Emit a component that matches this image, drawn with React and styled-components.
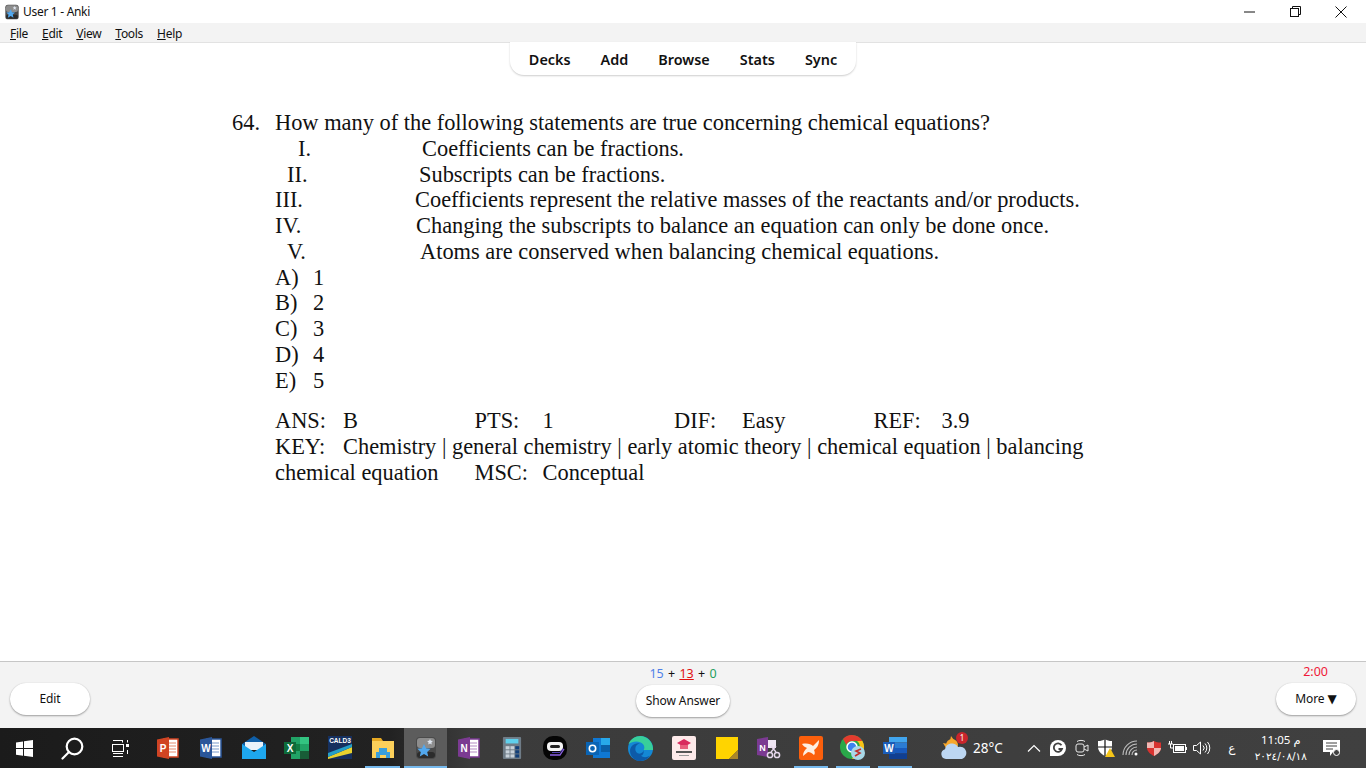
import styled, { createGlobalStyle } from "styled-components"

const UI_FONT = `"Noto Sans", "Open Sans", "DejaVu Sans", sans-serif`

const GlobalStyle = createGlobalStyle`
  html, body {
    margin: 0;
    padding: 0;
    height: 100%;
    overflow: hidden;
    background: #fff;
    font-family: ${UI_FONT};
  }
`

const Screen = styled.div`
  width: 1366px;
  height: 768px;
  display: flex;
  flex-direction: column;
`

/* window chrome */

const TitleBar = styled.div`
  height: 23px;
  display: flex;
  align-items: center;
  padding-left: 4px;
  background: #fff;
  color: #111;
  font-size: 12px;
  letter-spacing: -0.3px;
`

const TitleText = styled.span`
  margin-left: 3px;
  flex: 1;
`

const WinButton = styled.div`
  width: 46px;
  height: 23px;
  display: flex;
  align-items: center;
  justify-content: center;
`

const WinButtons = styled.div`
  display: flex;
  padding-right: 2px;
`

const MenuBar = styled.div`
  height: 19px;
  box-sizing: content-box;
  display: flex;
  align-items: center;
  gap: 14px;
  padding-left: 10px;
  background: #f3f3f3;
  border-bottom: 1px solid #e2e2e2;
  font-size: 12px;
  letter-spacing: -0.3px;
  color: #111;
  u {
    text-decoration-thickness: 1px;
  }
  span {
    padding-top: 2px;
  }
`

const TopNav = styled.nav`
  align-self: center;
  margin-top: -1px;
  height: 33px;
  box-sizing: border-box;
  display: flex;
  align-items: center;
  gap: 30px;
  padding: 2px 19px 0;
  background: #fff;
  border-radius: 0 0 14px 14px;
  box-shadow: 0 1px 2px rgba(0, 0, 0, 0.2);
  font-size: 14.4px;
  font-weight: 600;
  color: #111;
`

/* card */

const Main = styled.main`
  flex: 1;
  min-height: 0;
  padding: 35px 0 0 232px;
  font-family: "Liberation Serif", "Times New Roman", serif;
  font-size: 22.4px;
  line-height: 25.75px;
  color: #111;
`

const QuestionRow = styled.div`
  display: grid;
  grid-template-columns: 43px 1fr;
`

const Statement = styled.div`
  display: flex;
  margin-left: 43px;
`

const StatementNum = styled.span`
  width: 140px;
  flex: none;
  padding-left: ${(p) => p.$num}px;
  box-sizing: border-box;
`

const StatementText = styled.span`
  padding-left: ${(p) => p.$text}px;
`

const Choice = styled.div`
  margin-left: 43px;
  display: flex;
  span:first-child {
    width: 38px;
  }
`

const Meta = styled.div`
  margin: 15px 0 0 43px;
  width: 820px;
`

const MetaLine = styled.div`
  display: flex;
`

const MetaField = styled.div`
  width: 199.5px;
  flex: none;
  display: flex;
`

const MetaLabel = styled.span`
  width: 68px;
  flex: none;
`

/* bottom answer bar */

const BottomBar = styled.div`
  height: 66px;
  display: grid;
  grid-template-columns: 1fr auto 1fr;
  padding: 0 10px;
  background: #f3f3f3;
  border-top: 1px solid #c6c6c6;
  font-size: 12px;
  color: #111;
`

const BarSide = styled.div`
  display: flex;
  flex-direction: column;
  align-items: ${(p) => (p.$right ? "flex-end" : "flex-start")};
  justify-content: flex-end;
  padding-bottom: 13px;
`

const BarCenter = styled.div`
  display: flex;
  flex-direction: column;
  align-items: center;
  justify-content: flex-end;
  padding-bottom: 11px;
`

const PillButton = styled.button`
  all: unset;
  box-sizing: border-box;
  width: ${(p) => p.$width}px;
  height: 32px;
  text-align: center;
  background: #fff;
  border-radius: 16px;
  font-size: 12px;
  letter-spacing: -0.1px;
  line-height: 32px;
  color: #111;
  box-shadow: 0 1px 2px rgba(0, 0, 0, 0.35), 0 0 1px rgba(0, 0, 0, 0.15);
`

const Counts = styled.div`
  font-size: 12.5px;
  word-spacing: 1px;
  line-height: 16px;
  margin-bottom: 3px;
`

const Count = styled.span`
  color: ${(p) => p.$color || "#111"};
  text-decoration: ${(p) => (p.$under ? "underline" : "none")};
`

const Timer = styled.div`
  color: #f01838;
  font-size: 12.5px;
  line-height: 16px;
  margin: 0 28px 3px 0;
`

/* taskbar */

const Taskbar = styled.div`
  height: 40px;
  display: flex;
  align-items: center;
  background: linear-gradient(90deg, #1b1b1b 0, #222 390px, #3b3b3b 470px, #404040 100%);
  color: #fff;
`

const ShellSlot = styled.div`
  width: 48px;
  height: 40px;
  flex: none;
  display: flex;
  align-items: center;
  justify-content: center;
`

const AppList = styled.div`
  display: flex;
  margin-left: 2px;
`

const AppSlot = styled.div`
  position: relative;
  width: ${(p) => (p.$narrow ? 42 : 43)}px;
  height: 40px;
  flex: none;
  display: flex;
  align-items: center;
  justify-content: center;
  background: ${(p) => (p.$active ? "#5c5c5c" : "transparent")};
  &::after {
    content: "";
    display: ${(p) => (p.$running || p.$active ? "block" : "none")};
    position: absolute;
    bottom: 0;
    left: ${(p) => (p.$active ? 0 : 4)}px;
    right: ${(p) => (p.$active ? 0 : 4)}px;
    height: 2px;
    background: #76b9ed;
  }
`

const Weather = styled.div`
  position: relative;
  margin-left: 25px;
  width: 26px;
  display: flex;
`

const WeatherBadge = styled.span`
  position: absolute;
  top: -4px;
  right: -1px;
  width: 12px;
  height: 12px;
  border-radius: 50%;
  background: #c9252c;
  font-size: 8px;
  line-height: 12px;
  text-align: center;
  color: #fff;
`

const Temperature = styled.span`
  margin-left: 6px;
  font-size: 13.5px;
`

const Tray = styled.div`
  margin-left: 19px;
  display: flex;
  align-items: center;
`

const TrayItem = styled.div`
  width: 24px;
  height: 40px;
  flex: none;
  display: flex;
  align-items: center;
  justify-content: center;
`

const Lang = styled.span`
  margin-left: 8px;
  width: 20px;
  text-align: center;
  font-family: "DejaVu Sans", sans-serif;
  font-size: 12px;
`

const Clock = styled.div`
  width: 58px;
  margin-left: 10px;
  display: flex;
  flex-direction: column;
  align-items: center;
  font-size: 11.5px;
  line-height: 17px;
  font-family: "Noto Sans", "DejaVu Sans", sans-serif;
`

const ClockDate = styled.span`
  font-family: "DejaVu Sans", sans-serif;
  font-size: 10.5px;
`

const NotifySlot = styled.div`
  width: 42px;
  display: flex;
  justify-content: center;
  margin-left: 1px;
`

/* icons */

function AnkiIcon({ size = 24 }) {
  return (
    <svg width={size} height={size} viewBox="0 0 24 24">
      <rect x="2" y="1" width="20" height="22" rx="4" fill="#4a4a4a" />
      <rect x="3" y="2" width="18" height="10" rx="3" fill="#8d8d8d" />
      <rect x="3" y="16" width="18" height="6" rx="3" fill="#2c2c2c" />
      <path d="M16 3l.9 1.800 2 .3-1.500 1.400.4 2L16 7.600l-1.800.9.400-2L13.100 5.100l2-.3z" fill="#dfe6f0" />
      <path d="M10 8l2 4.300 4.600.5-3.400 3.100 1 4.600-4.200-2.400-4.200 2.400 1-4.600-3.400-3.100 4.600-.5z" fill="#52a8ee" />
    </svg>
  )
}

function WindowsLogo() {
  return (
    <svg width="17" height="17" viewBox="0 0 17 17" fill="#fff">
      <path d="M0 2.400l7-1v6.700H0zM8 1.300L17 0v8.100H8zM0 9h7v6.700l-7-1zM8 9h9v8l-9-1.300z" />
    </svg>
  )
}

function SearchIcon() {
  return (
    <svg width="23" height="23" viewBox="0 0 23 23" fill="none" stroke="#fff" strokeWidth="2.200">
      <circle cx="13.500" cy="9.500" r="7.800" />
      <path d="M8 15L1.500 21.500" strokeLinecap="round" />
    </svg>
  )
}

function TaskViewIcon() {
  return (
    <svg width="17" height="17" viewBox="0 0 17 17" fill="none" stroke="#fff" strokeWidth="1">
      <path d="M1 .5h10M1 16.500h10M10.500 .5v2M1 13.500h10" />
      <rect x=".5" y="4.500" width="11" height="7" />
      <rect x="14" y="4" width="3" height="3" fill="#fff" stroke="none" />
      <path d="M15.500 0v2.500M15.500 10v4" />
    </svg>
  )
}

function OfficeIcon({ letter, dark, light, page = "#fff" }) {
  return (
    <svg width="24" height="24" viewBox="0 0 24 24">
      <rect x="8" y="3" width="14" height="18" fill={page} stroke={dark} strokeWidth="1.500" />
      <path d="M13 7h7M13 10h7M13 13h7M13 16h7" stroke={light} strokeWidth="1.200" />
      <path d="M1 3.500L13 1v22L1 20.500z" fill={dark} />
      <text x="7" y="15.500" fontSize="10" fontWeight="700" fill="#fff" textAnchor="middle" fontFamily="Liberation Sans, sans-serif">
        {letter}
      </text>
    </svg>
  )
}

function MailIcon() {
  return (
    <svg width="24" height="24" viewBox="0 0 24 24">
      <path d="M12 0L24 8v4H0V8z" fill="#0f5fa8" />
      <path d="M3 6h18v8H3z" fill="#e9f2fa" />
      <path d="M0 8l12 8 12-8v15H0z" fill="#1ea7ee" />
    </svg>
  )
}

function ExcelIcon() {
  return (
    <svg width="26" height="24" viewBox="0 0 26 24">
      <path d="M7 1h18v22H7z" fill="#21a366" />
      <path d="M16 1h9v7h-9z" fill="#33c481" />
      <path d="M7 8h9v7H7z" fill="#107c41" />
      <path d="M16 15h9v8h-9z" fill="#185c37" />
      <rect y="6" width="12" height="12" fill="#0e6b3a" />
      <text x="6" y="15.500" fontSize="10" fontWeight="700" fill="#fff" textAnchor="middle" fontFamily="Liberation Sans, sans-serif">
        X
      </text>
    </svg>
  )
}

function CaldIcon() {
  return (
    <svg width="24" height="24" viewBox="0 0 24 24">
      <rect width="24" height="23" fill="#16305e" />
      <path d="M0 21L24 11v6L0 23z" fill="#e8d22e" />
      <path d="M0 17L24 8v3L0 21z" fill="#24a0c8" />
      <text x="12" y="7" fontSize="6.500" fontWeight="700" fill="#fff" textAnchor="middle" fontFamily="Liberation Sans, sans-serif">
        CALD3
      </text>
    </svg>
  )
}

function FolderIcon() {
  return (
    <svg width="22" height="22" viewBox="0 0 22 22">
      <path d="M0 1h9l2 3h11v4H0z" fill="#e7a923" />
      <rect y="4" width="22" height="17" fill="#fcd05a" />
      <path d="M7 11h8v4h3v6h-4v-3H8v3H4v-6h3z" fill="#3a9fdc" />
    </svg>
  )
}

function CalcIcon() {
  const keys = []
  for (let r = 0; r < 3; r++) {
    for (let c = 0; c < 3; c++) {
      keys.push(<rect key={`${r}${c}`} x={4 + c * 5.300} y={10 + r * 4.500} width="4.300" height="3.500" fill={c === 2 ? "#123f78" : "#c8d2da"} />)
    }
  }
  return (
    <svg width="20" height="24" viewBox="0 0 22 24">
      <rect x="1" width="20" height="24" rx="1" fill="#6f7c87" />
      <rect x="4" y="2" width="14" height="5" fill="#5fd0ec" />
      {keys}
    </svg>
  )
}

function BotIcon() {
  return (
    <svg width="24" height="24" viewBox="0 0 24 24">
      <rect width="24" height="24" rx="10" fill="#050505" />
      <rect x="4" y="6" width="16" height="9" rx="4" fill="#f4f4f4" />
      <rect x="7" y="9" width="10" height="3" rx="1.500" fill="#222" />
      <path d="M7 19h10l4-6" stroke="#8a5fe0" strokeWidth="1.300" fill="none" />
      <path d="M9 16.500h8l3-4" stroke="#5040b0" strokeWidth="1" fill="none" />
    </svg>
  )
}

function OutlookIcon() {
  return (
    <svg width="24" height="24" viewBox="0 0 24 24">
      <rect x="7" y="2" width="17" height="20" fill="#0f78d4" />
      <rect x="15" y="2" width="9" height="7" fill="#28a8ea" />
      <rect x="15" y="9" width="9" height="7" fill="#0a5ea8" />
      <rect y="6" width="13" height="13" fill="#0a64b4" />
      <circle cx="6.500" cy="12.500" r="3.200" fill="none" stroke="#fff" strokeWidth="1.600" />
    </svg>
  )
}

function EdgeIcon() {
  return (
    <svg width="25" height="25" viewBox="0 0 24 24">
      <circle cx="12" cy="12" r="12" fill="#1488d4" />
      <path d="M24 13.500C24.500 5.500 18 0 12 0 7 0 2 3 .5 8c4-3.500 11-3.500 14 0 1.500 1.800 1.500 3.500.5 5.500z" fill="#38cf9a" />
      <path d="M15 13.500c0 2-2 3.500-4 3.500-2.500 0-4-2-4-4.500 0-3 2-5 4.500-5.500C6 6 1.500 10 2 15c.5 5 5 9 10 9 4 0 7-2 9-5-3 2-7 1.500-8.500 0 1.500-.5 3-2 2.500-5.500z" fill="#0d5aa8" />
    </svg>
  )
}

function MyTechIcon() {
  return (
    <svg width="24" height="24" viewBox="0 0 24 24">
      <rect width="24" height="24" rx="2" fill="#fdeaea" />
      <path d="M5 7l7-4 7 4-7 4z" fill="#d92c5e" />
      <path d="M8 9h8v4H8z" fill="#e8607e" />
      <rect x="4" y="15" width="16" height="2" fill="#555" />
      <rect x="7" y="19" width="10" height="1" fill="#999" />
    </svg>
  )
}

function StickyIcon() {
  return (
    <svg width="22" height="22" viewBox="0 0 22 22">
      <path d="M0 0h22v13l-9 9H0z" fill="#ffd400" />
      <path d="M22 13v9h-9z" fill="#a9862a" />
    </svg>
  )
}

function OneNoteClipIcon() {
  return (
    <svg width="24" height="24" viewBox="0 0 24 24">
      <path d="M0 3l11-2v20L0 19z" fill="#7b3a92" />
      <rect x="11" y="4" width="8" height="8" fill="#f0e6f4" />
      <circle cx="13" cy="19" r="2.600" fill="none" stroke="#e8d8ee" strokeWidth="1.500" />
      <circle cx="20" cy="19" r="2.600" fill="none" stroke="#e8d8ee" strokeWidth="1.500" />
      <path d="M14 16l5-6M19 16l-5-6" stroke="#e8d8ee" strokeWidth="1.300" />
      <text x="5.500" y="14.500" fontSize="9" fontWeight="700" fill="#fff" textAnchor="middle" fontFamily="Liberation Sans, sans-serif">
        N
      </text>
    </svg>
  )
}

function OrangeAppIcon() {
  return (
    <svg width="24" height="24" viewBox="0 0 24 24">
      <rect width="24" height="24" rx="2" fill="#fb5f0c" />
      <path d="M3 8c5-1 9 0 11 2l6-6c0 5-2 8-5 10 1 2 1 4 0 5-2-2-4-3-6-3l-5 4c0-4 2-6 4-8-2-1-4-2-5-4z" fill="#fdeee2" />
    </svg>
  )
}

function ChromeIcon() {
  return (
    <svg width="26" height="26" viewBox="0 0 26 26">
      <circle cx="12" cy="12" r="12" fill="#2aa84a" />
      <path d="M12 0a12 12 0 0 1 10.400 6H12a6 6 0 0 0-5.600 4L3 4a12 12 0 0 1 9-4z" fill="#e33b2e" />
      <path d="M22.400 6A12 12 0 0 1 12 24l5-8a6 6 0 0 0 0-10z" fill="#fbc116" />
      <circle cx="12" cy="12" r="5" fill="#3b82f0" stroke="#fff" strokeWidth="1.500" />
      <circle cx="18" cy="18" r="7" fill="#a8d8e8" />
      <path d="M21 14l-5 2 4 2-5 3" stroke="#c0302c" strokeWidth="1.600" fill="none" />
    </svg>
  )
}

function WordNewIcon() {
  return (
    <svg width="24" height="24" viewBox="0 0 24 24">
      <rect x="6" y="1" width="18" height="5.500" fill="#41a5ee" />
      <rect x="6" y="6.500" width="18" height="5.500" fill="#2b7cd3" />
      <rect x="6" y="12" width="18" height="5.500" fill="#185abd" />
      <rect x="6" y="17.500" width="18" height="5.500" fill="#103f91" />
      <rect y="6" width="12" height="12" fill="#1a5cb8" />
      <text x="6" y="15.500" fontSize="10" fontWeight="700" fill="#fff" textAnchor="middle" fontFamily="Liberation Sans, sans-serif">
        W
      </text>
    </svg>
  )
}

function WeatherIcon() {
  return (
    <svg width="26" height="24" viewBox="0 0 26 24">
      <circle cx="11" cy="9" r="6" fill="#f7a72c" />
      <path d="M2 7l5 1-2 4zM10 0l3 4-4 1z" fill="#f7a72c" />
      <path d="M5 23a5 5 0 0 1-1-9.800A7 7 0 0 1 17 11a5.500 5.500 0 0 1 4 12z" fill="#bcd6f2" />
    </svg>
  )
}

function GrammarlyIcon() {
  return (
    <svg width="16" height="16" viewBox="0 0 16 16">
      <circle cx="8" cy="8" r="8" fill="#fff" />
      <rect y="8" width="8" height="8" fill="#fff" />
      <path d="M11.500 5.200A4.200 4.200 0 1 0 12 9H8.500" fill="none" stroke="#404040" strokeWidth="1.800" />
    </svg>
  )
}

function CameraIcon() {
  return (
    <svg width="14" height="18" viewBox="0 0 14 18" fill="none" stroke="#e8e8e8" strokeWidth="1">
      <rect x="1" y="5" width="8" height="8" rx="2" />
      <path d="M9 8l4-2v6l-4-2" />
      <path d="M2 2.500c2-1.500 6-1.500 8 0M2 15.500c2 1.500 6 1.500 8 0" />
    </svg>
  )
}

function DefenderIcon() {
  return (
    <svg width="18" height="18" viewBox="0 0 18 18">
      <path d="M8 0c2 1.500 4 2 7 2v6c0 4-3 7-7 9-4-2-7-5-7-9V2c3 0 5-.5 7-2z" fill="#fff" />
      <path d="M8 0v17M1 8h14" stroke="#111" strokeWidth="1.200" />
      <path d="M13 9l5 9H8z" fill="#f5c518" />
    </svg>
  )
}

function WifiIcon() {
  return (
    <svg width="16" height="16" viewBox="0 0 16 16" fill="none" stroke="#bdbdbd" strokeWidth="1.100">
      <path d="M1 15a14 14 0 0 1 14-14M4 15a11 11 0 0 1 11-11M7 15a8 8 0 0 1 8-8M10 15a5 5 0 0 1 5-5" />
      <circle cx="14" cy="14" r="1.500" fill="#fff" stroke="none" />
    </svg>
  )
}

function RedShieldIcon() {
  return (
    <svg width="16" height="16" viewBox="0 0 16 16">
      <path d="M8 1c2 1 4 1.500 7 1.500V8c0 3-3 6-7 8-4-2-7-5-7-8V2.500C4 2.500 6 2 8 1z" fill="#d8322f" />
      <path d="M8 1v7H1V2.500C4 2.500 6 2 8 1zM8 8h7c0 3-3 6-7 8z" fill="#f1b7b3" />
    </svg>
  )
}

function BatteryIcon() {
  return (
    <svg width="20" height="14" viewBox="0 0 20 14" fill="none" stroke="#fff" strokeWidth="1">
      <rect x="5.500" y="3.500" width="12" height="8" />
      <rect x="7" y="5" width="9" height="5" fill="#fff" stroke="none" />
      <path d="M18 6v3" strokeWidth="2" />
      <path d="M0 3h5M1.500 0v3M3.500 0v3M2.500 3v4h3" />
    </svg>
  )
}

function SpeakerIcon() {
  return (
    <svg width="18" height="14" viewBox="0 0 18 14" fill="none" stroke="#fff" strokeWidth="1">
      <path d="M.5 4.500h3L7.500 1v12l-4-3.500h-3z" />
      <path d="M10 4.500a3.500 3.500 0 0 1 0 5M12 2.500a6.500 6.500 0 0 1 0 9M14.500 1a9 9 0 0 1 0 12" />
    </svg>
  )
}

function NotifyIcon() {
  return (
    <svg width="18" height="17" viewBox="0 0 18 17">
      <path d="M0 0h17v12h-7l-3 4v-4H0z" fill="#fff" />
      <path d="M3 3h11M3 6h11M3 9h7" stroke="#404040" strokeWidth="1" />
      <circle cx="13.500" cy="12.500" r="3" fill="#404040" stroke="#fff" strokeWidth="1" />
    </svg>
  )
}

const statements = [
  { n: "I.", num: 23, text: 7, body: "Coefficients can be fractions." },
  { n: "II.", num: 12, text: 4, body: "Subscripts can be fractions." },
  { n: "III.", num: 0, text: 0, body: "Coefficients represent the relative masses of the reactants and/or products." },
  { n: "IV.", num: 0, text: 1, body: "Changing the subscripts to balance an equation can only be done once." },
  { n: "V.", num: 12, text: 5, body: "Atoms are conserved when balancing chemical equations." },
]

const choices = [
  ["A)", "1"],
  ["B)", "2"],
  ["C)", "3"],
  ["D)", "4"],
  ["E)", "5"],
]

const apps = [
  { id: "ppt", icon: <OfficeIcon letter="P" dark="#d04423" light="#e58b70" /> },
  { id: "word", icon: <OfficeIcon letter="W" dark="#2a5699" light="#7a9bcc" /> },
  { id: "mail", icon: <MailIcon /> },
  { id: "excel", icon: <ExcelIcon /> },
  { id: "cald", icon: <CaldIcon /> },
  { id: "folder", icon: <FolderIcon />, running: true },
  { id: "anki", icon: <AnkiIcon />, active: true },
  { id: "onenote", icon: <OfficeIcon letter="N" dark="#7b3a92" light="#b48ac4" /> },
  { id: "calc", icon: <CalcIcon /> },
  { id: "bot", icon: <BotIcon /> },
  { id: "outlook", icon: <OutlookIcon /> },
  { id: "edge", icon: <EdgeIcon /> },
  { id: "mytech", icon: <MyTechIcon /> },
  { id: "sticky", icon: <StickyIcon /> },
  { id: "onenote2", icon: <OneNoteClipIcon />, narrow: true },
  { id: "orange", icon: <OrangeAppIcon />, running: true, narrow: true },
  { id: "chrome", icon: <ChromeIcon />, running: true, narrow: true },
  { id: "word2", icon: <WordNewIcon />, running: true, narrow: true },
]

const trayIcons = [
  <svg key="up" width="14" height="8" viewBox="0 0 14 8" fill="none" stroke="#fff" strokeWidth="1.200"><path d="M1 7.500l6-6 6 6" /></svg>,
  <GrammarlyIcon key="g" />,
  <CameraIcon key="cam" />,
  <DefenderIcon key="def" />,
  <WifiIcon key="wifi" />,
  <RedShieldIcon key="red" />,
  <BatteryIcon key="bat" />,
  <SpeakerIcon key="vol" />,
]

export default function App() {
  return (
    <Screen>
      <GlobalStyle />
      <TitleBar>
        <AnkiIcon size={16} />
        <TitleText>User 1 - Anki</TitleText>
        <WinButtons>
          <WinButton>
            <svg width="11" height="2" viewBox="0 0 11 2"><path d="M0 1h11" stroke="#111" /></svg>
          </WinButton>
          <WinButton>
            <svg width="11" height="11" viewBox="0 0 11 11" fill="none" stroke="#111"><rect x=".5" y="2.500" width="8" height="8" /><path d="M2.500 2.500V.5h8v8H8.500" /></svg>
          </WinButton>
          <WinButton>
            <svg width="12" height="12" viewBox="0 0 12 12" fill="none" stroke="#111"><path d="M.5 .5l11 11M11.500 .5l-11 11" /></svg>
          </WinButton>
        </WinButtons>
      </TitleBar>
      <MenuBar>
        <span><u>F</u>ile</span>
        <span><u>E</u>dit</span>
        <span><u>V</u>iew</span>
        <span><u>T</u>ools</span>
        <span><u>H</u>elp</span>
      </MenuBar>
      <TopNav>
        <span>Decks</span>
        <span>Add</span>
        <span>Browse</span>
        <span>Stats</span>
        <span>Sync</span>
      </TopNav>
      <Main>
        <QuestionRow>
          <span>64.</span>
          <span>How many of the following statements are true concerning chemical equations?</span>
        </QuestionRow>
        {statements.map(({ n, num, text, body }) => (
          <Statement key={n}>
            <StatementNum $num={num}>{n}</StatementNum>
            <StatementText $text={text}>{body}</StatementText>
          </Statement>
        ))}
        {choices.map(([letter, value]) => (
          <Choice key={letter}>
            <span>{letter}</span>
            <span>{value}</span>
          </Choice>
        ))}
        <Meta>
          <MetaLine>
            <MetaField><MetaLabel>ANS:</MetaLabel><span>B</span></MetaField>
            <MetaField><MetaLabel>PTS:</MetaLabel><span>1</span></MetaField>
            <MetaField><MetaLabel>DIF:</MetaLabel><span>Easy</span></MetaField>
            <MetaField><MetaLabel>REF:</MetaLabel><span>3.9</span></MetaField>
          </MetaLine>
          <MetaLine>
            <MetaLabel>KEY:</MetaLabel>
            <span>Chemistry | general chemistry | early atomic theory | chemical equation | balancing</span>
          </MetaLine>
          <MetaLine>
            <MetaField>chemical equation</MetaField>
            <MetaLabel>MSC:</MetaLabel>
            <span>Conceptual</span>
          </MetaLine>
        </Meta>
      </Main>
      <BottomBar>
        <BarSide>
          <PillButton $width={80}>Edit</PillButton>
        </BarSide>
        <BarCenter>
          <Counts>
            <Count $color="#4f80e8">15</Count> + <Count $color="#e01010" $under>13</Count> + <Count $color="#1fa060">0</Count>
          </Counts>
          <PillButton $width={94}>Show Answer</PillButton>
        </BarCenter>
        <BarSide $right>
          <Timer>2:00</Timer>
          <PillButton $width={80}>More ▼</PillButton>
        </BarSide>
      </BottomBar>
      <Taskbar>
        <ShellSlot><WindowsLogo /></ShellSlot>
        <ShellSlot><SearchIcon /></ShellSlot>
        <ShellSlot><TaskViewIcon /></ShellSlot>
        <AppList>
          {apps.map(({ id, icon, running, active, narrow }) => (
            <AppSlot key={id} $running={running} $active={active} $narrow={narrow}>{icon}</AppSlot>
          ))}
        </AppList>
        <Weather>
          <WeatherIcon />
          <WeatherBadge>1</WeatherBadge>
        </Weather>
        <Temperature>28°C</Temperature>
        <Tray>
          {trayIcons.map((icon) => (
            <TrayItem key={icon.key}>{icon}</TrayItem>
          ))}
        </Tray>
        <Lang>ع</Lang>
        <Clock>
          <span>11:05 م</span>
          <ClockDate>٢٠٢٤/٠٨/١٨</ClockDate>
        </Clock>
        <NotifySlot><NotifyIcon /></NotifySlot>
      </Taskbar>
    </Screen>
  )
}
